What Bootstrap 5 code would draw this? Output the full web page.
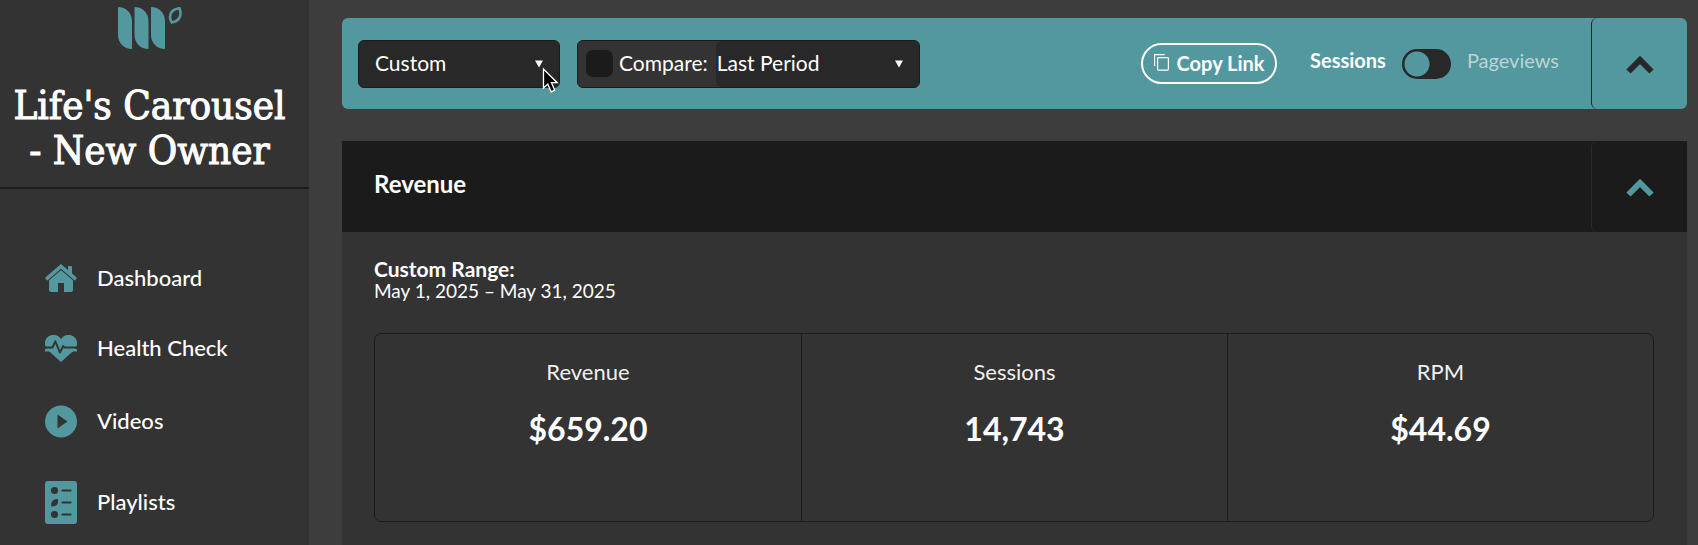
<!DOCTYPE html>
<html lang="en">
<head>
<meta charset="utf-8">
<meta name="viewport" content="width=device-width, initial-scale=1">
<title>Life's Carousel - New Owner</title>
<link href="https://cdn.jsdelivr.net/npm/bootstrap@5.3.0/dist/css/bootstrap.min.css" rel="stylesheet">
<style>
  :root { --teal: #52989e; --ink: #1b1b1b; --panel: #333333; --page: #3d3d3d; --field: #282828; }
  body { background: var(--page); color: #fff; font-family: Lato, "Open Sans", sans-serif; font-size: 21px; line-height: 24px; }
  .sidebar { width: 309px; background: var(--panel); }
  .brand { height: 189px; border-bottom: 2px solid var(--ink); padding: 7px 10px 0 0; }
  .brand-title { font-family: "DejaVu Serif Condensed", "DejaVu Serif", serif; font-size: 40px; line-height: 45px; margin-top: 34px; font-weight: 400; white-space: nowrap; -webkit-text-stroke: 1px #fff; }
  .side-nav { gap: 43px; padding: 75px 45px 20px; }
  .side-nav a { gap: 20px; color: #fff; text-decoration: none; font-size: 22px; line-height: 26px; font-weight: 500; }
  .side-nav span { padding-bottom: 2px; margin-bottom: -1px; }
  .content { padding: 18px 11px 0 33px; }
  .toolbar { background: var(--teal); min-height: 91px; border-radius: 6px; padding-left: 16px; }
  .pick { height: 48px; border: 1px solid var(--ink); border-radius: 6px; font-size: 21px; line-height: 24px; color: #fff; padding: 0 28px 2px 16px;
    background: var(--field) url("data:image/svg+xml,%3Csvg xmlns='http://www.w3.org/2000/svg' viewBox='0 0 8 8'%3E%3Cpath fill='%23fff' d='M0 .5h8L4 7.5z'/%3E%3C/svg%3E") no-repeat right 16px center / 8px 8px; }
  .pick-range { width: 202px; }
  .compare { width: 343px; height: 48px; margin-left: 17px; border: 1px solid var(--ink); border-radius: 6px; background: var(--panel); padding-left: 8px; }
  .compare .pick { height: 46px; border: 0; padding-left: 1px; }
  .compare label { padding: 0 8px 2px 6px; }
  .compare .tick { width: 27px; height: 27px; margin: 0; border: 0; border-radius: 7px; background-color: var(--ink); }
  .copy-btn { width: 136px; height: 41px; border: 2px solid #fff; border-radius: 21px; color: #fff; font-size: 20px; line-height: 24px; font-weight: 700; padding: 0 0 2px; gap: 8px; }
  .units { margin-left: 33px; }
  .unit { font-size: 20px; padding-bottom: 8px; }
  .unit-off { color: #bcd4d6; }
  .toolbar .unit-switch { width: 49px; height: 30px; margin: 0; border: 0; border-radius: 15px; background: #282828 radial-gradient(circle at 15px 15px, var(--teal) 12px, #282828 13px); }
  .fold { width: 96px; border: 0; border-left: 1px solid #222; border-radius: 6px; background: transparent; padding: 0 0 3px; color: #282828; }
  .section-head { background: var(--ink); height: 91px; margin-top: 32px; padding-left: 32px; }
  .section-head h2 { font-size: 24px; line-height: 28px; font-weight: 700; padding-bottom: 5px; }
  .section-head .fold { border-left-color: #2b2b2b; color: var(--teal); }
  .section-body { background: var(--panel); padding: 26px 33px 23px 32px; }
  .range { line-height: 22px; font-size: 21px; }
  .range-dates { font-size: 19px; line-height: 21px; }
  .stats { margin-top: 32px; border: 1px solid var(--ink); border-radius: 7px; min-height: 189px; }
  .stat + .stat { border-left: 1px solid var(--ink); }
  .stat { padding-top: 24px; }
  .stat dt { font-weight: 400; font-size: 22px; line-height: 28px; color: #f0f0f0; }
  .stat dd { font-weight: 700; font-size: 32px; line-height: 40px; margin: 23px 0 0; }
  .cursor { position: absolute; left: 542px; top: 67px; pointer-events: none; }
</style>
</head>
<body>
<div class="d-flex min-vh-100">
  <aside class="sidebar flex-shrink-0">
    <div class="brand text-center">
      <svg class="d-block mx-auto" width="64" height="42" viewBox="0 0 64 42" fill="#52989e" aria-hidden="true">
        <path d="M0 0c8 0 14 6 14 14v28C6 42 0 36 0 28zM16.500 0c8 0 14 6 14 14v28c-8 0-14-6-14-14zM33 0c8 0 14 6 14 14v28c-8 0-14-6-14-14z"/>
        <path d="M61.500 1.200C55 2 52 5.500 52 10q0 3 1.800 5.500C59 14.500 62 11 62.500 7.500q.2-3-1-6.300z" fill="none" stroke="#52989e" stroke-width="2.600"/>
      </svg>
      <h1 class="brand-title mb-0">Life's Carousel<br>- New Owner</h1>
    </div>
    <nav class="side-nav d-flex flex-column">
      <a href="#" class="d-flex align-items-center">
        <svg width="32" height="28" viewBox="0 0 32 28" aria-hidden="true"><path fill="#52989e" d="M23 8V3a1 1 0 0 1 1-1h2a1 1 0 0 1 1 1v9zM16 3 4 13.500V26a2 2 0 0 0 2 2h7v-9h6v9h7a2 2 0 0 0 2-2V13.500z"/><path d="M2.500 16.800 16 5.200l13.500 11.600" fill="none" stroke="#333" stroke-width="1.400"/><path fill="#52989e" d="M16 0 .6 13.200a1.200 1.200 0 0 0 0 1.600l1 1.200a1 1 0 0 0 1.400.1L16 4.800l13 11.300a1 1 0 0 0 1.400-.1l1-1.200a1.200 1.200 0 0 0 0-1.600z"/></svg>
        <span>Dashboard</span></a>
      <a href="#" class="d-flex align-items-center">
        <svg width="32" height="27" viewBox="0 0 32 27" aria-hidden="true"><path fill="#52989e" d="M16 27 3.200 15.500C-1 11.500-1 5.500 2.500 2.200 6-1 11.500-.8 14.800 2.600L16 4l1.200-1.400C20.500-.8 26-1 29.500 2.200 33 5.500 33 11.500 28.800 15.500z"/><path d="M0 12.500h7.500l2.800-6.200 4.700 11.200 3.200-6.500 1 1.500H32" fill="none" stroke="#333" stroke-width="1.900" stroke-linejoin="round"/><path fill="#52989e" d="M0 14h8v2.500H0zM20 14h12v2.500H20z"/></svg>
        <span>Health Check</span></a>
      <a href="#" class="d-flex align-items-center">
        <svg width="32" height="33" viewBox="0 0 32 33" aria-hidden="true"><circle cx="16" cy="16.500" r="16" fill="#52989e"/><path d="M12.500 9.500v14L22.500 16.500z" fill="#333"/></svg>
        <span>Videos</span></a>
      <a href="#" class="d-flex align-items-center">
        <svg width="32" height="43" viewBox="0 0 32 43" aria-hidden="true"><rect width="32" height="43" rx="3" fill="#52989e"/><g fill="#333"><circle cx="9.500" cy="9.500" r="3.600"/><path d="M13 18v3.500q-.5 4-6.800 4v-2.500q.5-5 6.800-5z"/><circle cx="9.500" cy="33.500" r="3.600"/></g><path d="M17.500 9.500h8M17.500 21.500h8M17.500 33.500h8" stroke="#333" stroke-width="2.200" stroke-linecap="round"/></svg>
        <span>Playlists</span></a>
    </nav>
  </aside>

  <main class="content flex-grow-1">
    <div class="toolbar d-flex align-items-center">
      <select class="pick pick-range form-select" aria-label="Date range"><option>Custom</option></select>
      <div class="compare d-flex align-items-center">
        <input class="tick form-check-input flex-shrink-0" type="checkbox" id="compare">
        <label for="compare">Compare:</label>
        <select class="pick form-select flex-fill" aria-label="Comparison period"><option>Last Period</option></select>
      </div>
      <button type="button" class="copy-btn btn d-flex align-items-center justify-content-center ms-auto">
        <svg width="15" height="17" viewBox="0 0 15 17" fill="none" stroke="#fff" stroke-width="1.200" aria-hidden="true"><path d="M.6 12V.6h10"/><rect x="3.600" y="3.600" width="10.800" height="12.500" rx=".8"/></svg>
        Copy Link</button>
      <div class="units form-switch d-flex align-items-center p-0">
        <span class="unit fw-bold pe-3">Sessions</span>
        <input class="unit-switch form-check-input" type="checkbox" role="switch" id="unit">
        <label class="unit unit-off ps-3 pe-3 me-3" for="unit">Pageviews</label>
      </div>
      <button type="button" class="fold align-self-stretch" aria-label="Collapse filters">
        <svg width="28" height="19" viewBox="0 0 28 19" fill="none" stroke="currentColor" stroke-width="6" aria-hidden="true"><path d="M2.500 16.500 14 5l11.500 11.500"/></svg>
      </button>
    </div>

    <section>
      <div class="section-head d-flex align-items-center justify-content-between">
        <h2 class="mb-0">Revenue</h2>
        <button type="button" class="fold align-self-stretch" aria-label="Collapse revenue">
          <svg width="28" height="19" viewBox="0 0 28 19" fill="none" stroke="currentColor" stroke-width="6" aria-hidden="true"><path d="M2.500 16.500 14 5l11.500 11.500"/></svg>
        </button>
      </div>
      <div class="section-body">
        <p class="range fw-bold mb-0">Custom Range:</p>
        <p class="range-dates mb-0">May 1, 2025 – May 31, 2025</p>
        <dl class="stats row g-0 text-center mb-0">
          <div class="stat col-4"><dt>Revenue</dt><dd>$659.20</dd></div>
          <div class="stat col-4"><dt>Sessions</dt><dd>14,743</dd></div>
          <div class="stat col-4"><dt>RPM</dt><dd>$44.69</dd></div>
        </dl>
      </div>
    </section>
  </main>
</div>
<svg class="cursor" width="17" height="27" viewBox="0 0 17 27" aria-hidden="true"><path d="M1.500 2v19l4.300-4 3.300 7.800 3.600-1.600-3.200-7.500h5.700z" fill="#000" stroke="#fff" stroke-width="1.300"/></svg>
<script src="https://cdn.jsdelivr.net/npm/bootstrap@5.3.0/dist/js/bootstrap.bundle.min.js"></script>
</body>
</html>
